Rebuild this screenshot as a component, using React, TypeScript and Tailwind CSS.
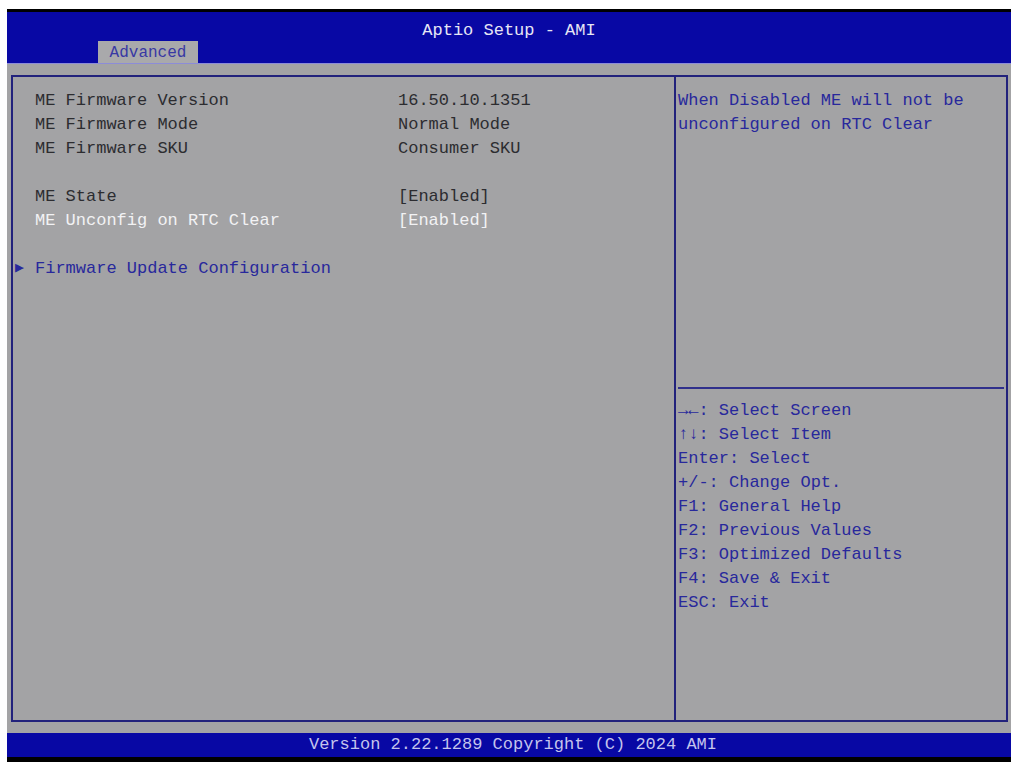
import React from 'react';

const infoRows = [
  { label: 'ME Firmware Version', value: '16.50.10.1351' },
  { label: 'ME Firmware Mode', value: 'Normal Mode' },
  { label: 'ME Firmware SKU', value: 'Consumer SKU' },
];

const keyHelp = [
  { key: '\u2192\u2190', text: ': Select Screen', bold: true },
  { key: '\u2191\u2193', text: ': Select Item', bold: true },
  { key: 'Enter', text: ': Select' },
  { key: '+/-', text: ': Change Opt.' },
  { key: 'F1', text: ': General Help' },
  { key: 'F2', text: ': Previous Values' },
  { key: 'F3', text: ': Optimized Defaults' },
  { key: 'F4', text: ': Save & Exit' },
  { key: 'ESC', text: ': Exit' },
];

const App = () => {
  return (
    <div
      className="w-[1015px] h-[762px] bg-white overflow-hidden flex flex-col text-[17px] leading-[24px]"
      style={{ fontFamily: '"Liberation Mono", "DejaVu Sans Mono", monospace' }}
    >
      {/* top edge */}
      <div className="h-[9px] shrink-0" />
      <div className="h-[3px] bg-black shrink-0 ml-[7px] w-[1004px]" />

      <div className="ml-[7px] w-[1004px] flex flex-col grow">
        {/* Header */}
        <div className="relative h-[52px] bg-[#0808a4] border-b border-[#8c8cd8] shrink-0">
          <div className="text-center text-[#e6e6f4] pt-[7px]">Aptio Setup - AMI</div>
          <div className="absolute left-[91px] bottom-0 w-[100px] h-[22px] bg-[#a9a9ab] text-[#3838a4] text-[16px] leading-[24px] text-center">
            Advanced
          </div>
        </div>

        {/* Body */}
        <div className="bg-[#a3a3a5] h-[669px] shrink-0 pt-[11px] pl-[4px] pr-[3px] pb-[11px]">
          <div className="flex h-full border-2 border-[#22227c]">
            {/* Left panel */}
            <div className="w-[663px] border-r-2 border-[#22227c] pt-[12px] text-[#2c2c30]">
              {infoRows.map((r) => (
                <div key={r.label} className="flex">
                  <span className="w-[385px] pl-[22px]">{r.label}</span>
                  <span>{r.value}</span>
                </div>
              ))}
              <div className="h-[24px]" />
              <div className="flex">
                <span className="w-[385px] pl-[22px]">ME State</span>
                <span>[Enabled]</span>
              </div>
              <div className="flex text-[#f2f2f4]">
                <span className="w-[385px] pl-[22px]">ME Unconfig on RTC Clear</span>
                <span>[Enabled]</span>
              </div>
              <div className="h-[24px]" />
              <div className="flex items-center text-[#28289c]">
                <span className="w-[22px] pl-[2px] text-[15px]">&#9654;</span>
                <span>Firmware Update Configuration</span>
              </div>
            </div>

            {/* Right panel */}
            <div className="grow flex flex-col pt-[12px] text-[#28289c]">
              <div className="pl-[2px] h-[298px]">
                <div>When Disabled ME will not be</div>
                <div>unconfigured on RTC Clear</div>
              </div>
              <div className="mx-[2px] border-t-2 border-[#30308c]" />
              <div className="pl-[2px] pt-[10px]">
                {keyHelp.map((k) => (
                  <div key={k.key}>
                    <span className={k.bold ? 'font-bold' : ''}>{k.key}</span>
                    {k.text}
                  </div>
                ))}
              </div>
            </div>
          </div>
        </div>

        {/* Footer */}
        <div className="h-[24px] bg-[#0808a4] text-center text-[#c4c4ec] leading-[24px] shrink-0 pl-[8px]">
          Version 2.22.1289 Copyright (C) 2024 AMI
        </div>
        <div className="h-[5px] bg-black shrink-0" />
      </div>
    </div>
  );
};

export default App;
